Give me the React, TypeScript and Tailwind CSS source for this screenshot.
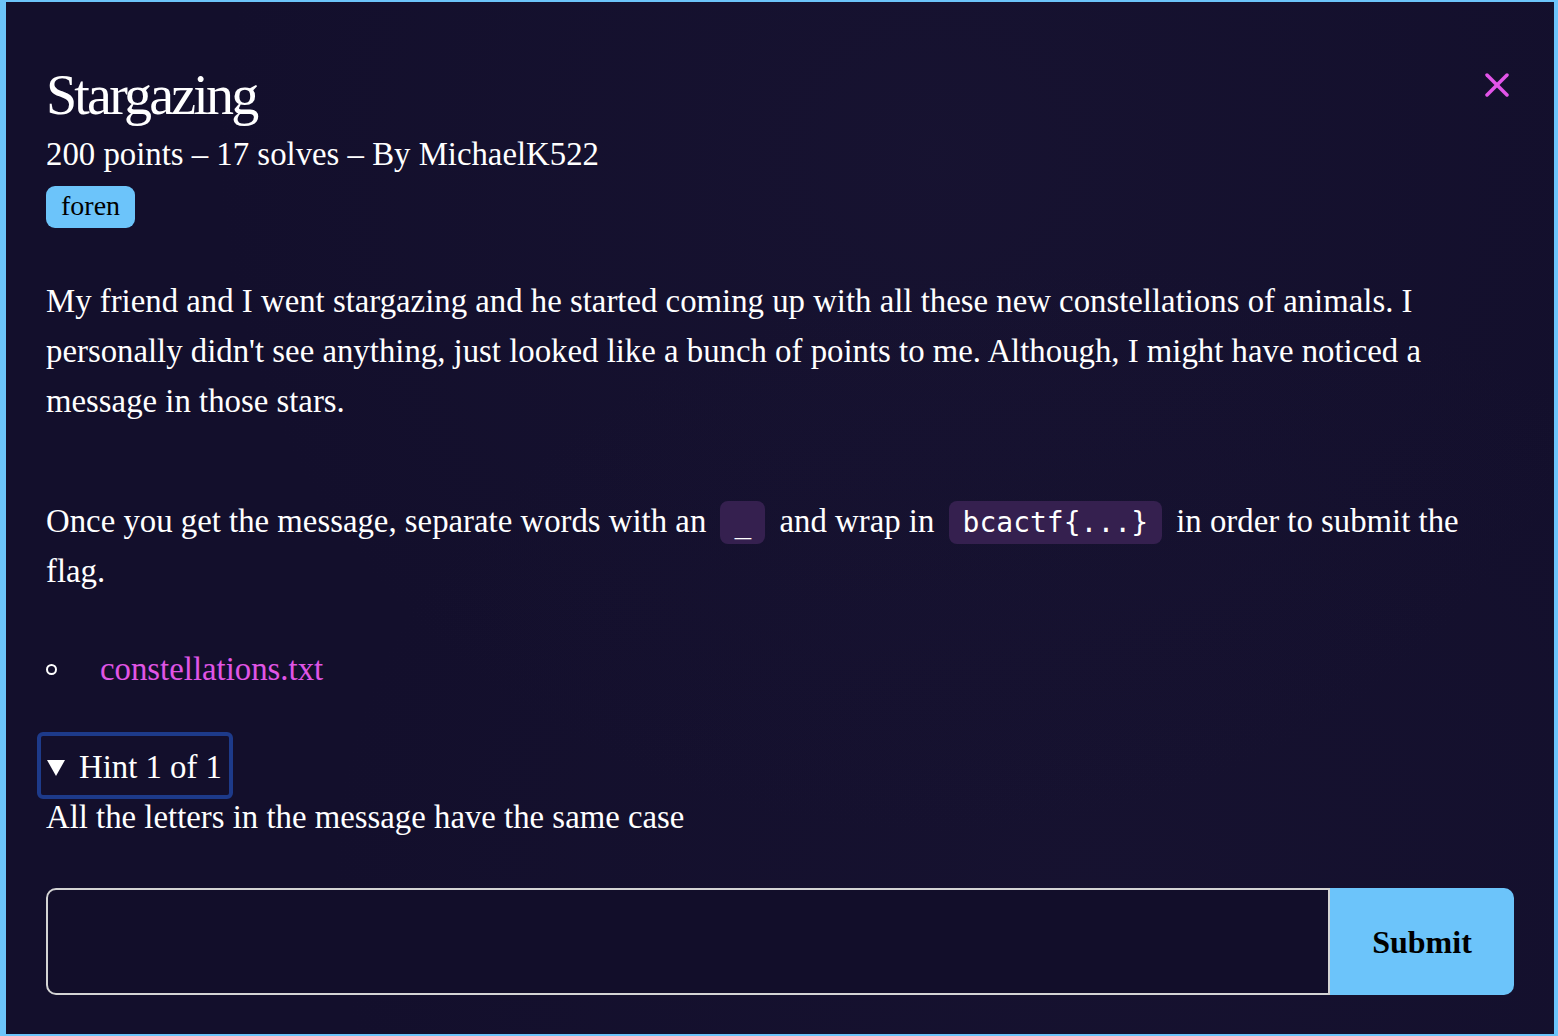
import React from "react";

export default function App() {
  const serif = { fontFamily: '"Liberation Serif", "Times New Roman", serif' };
  const mono = { fontFamily: '"DejaVu Sans Mono", monospace' };
  return (
    <div
      className="h-screen w-full border-t-2 border-l-[6px] border-r-4 border-b-2 border-[#6cc4fa] bg-[#130f2c] text-white overflow-hidden"
      style={serif}
    >
      <div className="h-full w-full bg-[radial-gradient(ellipse_at_60%_15%,rgba(40,34,70,0.18),transparent_55%),radial-gradient(ellipse_at_70%_85%,rgba(40,34,70,0.15),transparent_50%)] pl-[40px] pr-[40px] pt-[63px]">
        <div className="flex items-start justify-between">
          <h1 className="text-[56px] leading-[60px] tracking-[-2.8px] font-normal">Stargazing</h1>
          <button className="mt-[8px] mr-[5px] text-[#e254e8]" aria-label="close">
            <svg width="24" height="24" viewBox="0 0 24 24" fill="none" stroke="currentColor" strokeWidth="3.5" strokeLinecap="round">
              <line x1="2" y1="2" x2="22" y2="22" />
              <line x1="22" y1="2" x2="2" y2="22" />
            </svg>
          </button>
        </div>
        <div className="mt-[9px] text-[32.8px] leading-[40px]">200 points – 17 solves – By MichaelK522</div>
        <div className="mt-[12px]">
          <span className="inline-flex h-[42px] items-center rounded-[9px] bg-[#6cc4fa] px-[15px] pb-[2px] text-[28px] text-black">foren</span>
        </div>

        <p className="mt-[48px] text-[32.8px] leading-[50px]">
          My friend and I went stargazing and he started coming up with all these new constellations of animals. I personally didn't see anything, just looked like a bunch of points to me. Although, I might have noticed a message in those stars.
        </p>

        <p className="mt-[70px] text-[32.8px] leading-[50px]">
          Once you get the message, separate words with an{" "}
          <code className="mx-[6px] rounded-[8px] bg-[#35204f] px-[14px] py-[5px] text-[28px] leading-none" style={mono}>
            _
          </code>{" "}
          and wrap in{" "}
          <code className="mx-[6px] rounded-[8px] bg-[#35204f] px-[14px] py-[5px] text-[28px] leading-none" style={mono}>
            bcactf{"{...}"}
          </code>{" "}
          in order to submit the flag.
        </p>

        <div className="mt-[48px] flex items-center text-[32.8px] leading-[50px]">
          <span className="h-[11px] w-[11px] rounded-full border-2 border-white" />
          <a className="ml-[43px] text-[#e055e6]" href="#">constellations.txt</a>
        </div>

        <div className="relative mt-[48px] w-fit text-[32.8px] leading-[50px]">
          <span className="pointer-events-none absolute -left-[9px] -right-[11px] -top-[10px] -bottom-[7px] rounded-[6px] border-4 border-[#1d3a8a]" />
          <span className="flex items-center">
            <svg width="20" height="18" viewBox="0 0 20 18" className="mr-[13px] mt-[2px]">
              <polygon points="1,1 19,1 10,17" fill="white" />
            </svg>
            Hint 1 of 1
          </span>
        </div>
        <div className="text-[32.8px] leading-[50px]">All the letters in the message have the same case</div>

        <div className="mt-[46px] flex h-[107px]">
          <input className="flex-1 rounded-l-[10px] border-2 border-[#d4d4d4] bg-[#120e2a] px-4 text-[32px] text-white outline-none" />
          <button className="w-[184px] rounded-r-[10px] bg-[#6cc4fa] text-[32px] font-bold text-black" style={serif}>
            Submit
          </button>
        </div>
      </div>
    </div>
  );
}
